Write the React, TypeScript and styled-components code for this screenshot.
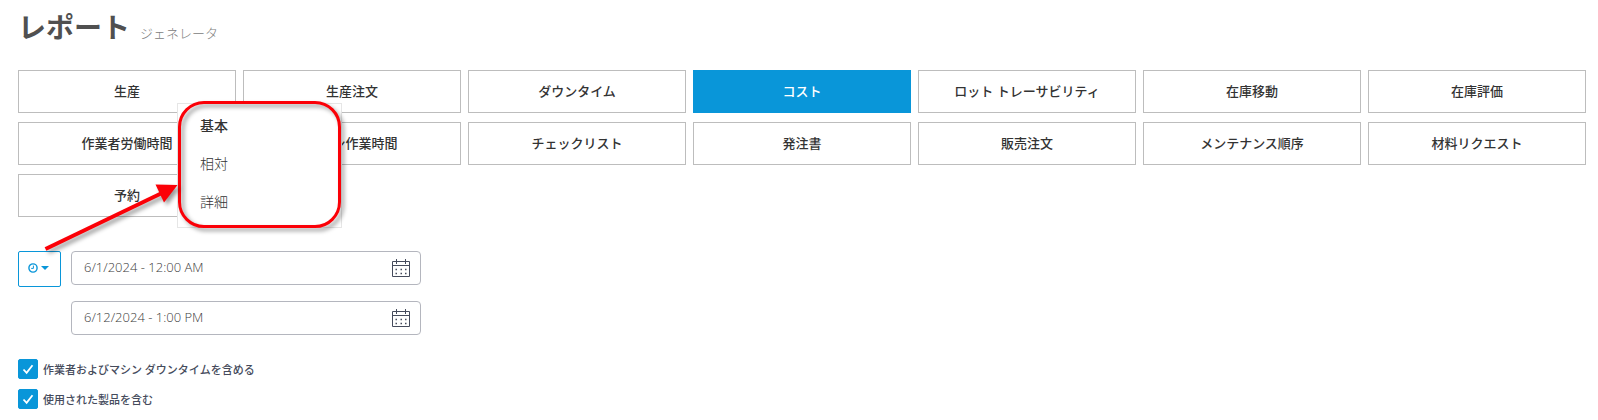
import React, { useState } from "react";
import styled, { createGlobalStyle } from "styled-components";

const blue = "#0996d9";

const GlobalStyle = createGlobalStyle`
  *, *::before, *::after { box-sizing: border-box; }
  body {
    margin: 0;
    background: #fff;
    color: #333;
    font-family: "Open Sans", "Noto Sans CJK JP", sans-serif;
  }
  button, input { font-family: inherit; }
`;

const Page = styled.main`
  position: relative;
  padding: 8px 12px 10px 18px;
`;

const Heading = styled.header`
  display: flex;
  align-items: baseline;
  gap: 10px;
  height: 40px;
  margin-bottom: 22px;
`;

const Title = styled.h1`
  margin: 0;
  font-size: 28px;
  line-height: 38px;
  font-weight: 700;
  color: #505050;
`;

const Subtitle = styled.small`
  font-size: 13px;
  font-weight: 300;
  color: #808080;
`;

const ReportGrid = styled.nav`
  display: grid;
  grid-template-columns: repeat(7, minmax(0, 1fr));
  gap: 9px 7px;
`;

const ReportButton = styled.button<{ $active: boolean }>`
  height: 43px;
  padding: 0 8px 2px;
  border: 1px solid ${(p) => (p.$active ? blue : "#bdbdbd")};
  background: ${(p) => (p.$active ? blue : "#fff")};
  color: ${(p) => (p.$active ? "#fff" : "#333")};
  font-size: 13px;
  font-weight: 500;
  line-height: 20px;
  white-space: nowrap;
  cursor: pointer;
`;

const Period = styled.section`
  display: flex;
  align-items: flex-start;
  gap: 10px;
  margin-top: 34px;
`;

const ModeButton = styled.button`
  display: flex;
  align-items: center;
  justify-content: center;
  gap: 3px;
  width: 43px;
  height: 36px;
  padding: 0 2px 2px 0;
  border: 1px solid ${blue};
  border-radius: 2px;
  background: #fff;
  color: ${blue};
  cursor: pointer;
`;

const Dates = styled.div`
  display: grid;
  gap: 16px;
  width: 350px;
`;

const DateField = styled.label`
  display: flex;
  align-items: center;
  height: 34px;
  padding: 0 10px 0 12px;
  border: 1px solid #b4b6be;
  border-radius: 4px;
`;

const DateInput = styled.input`
  flex: 1;
  min-width: 0;
  padding: 0 0 2px;
  border: 0;
  outline: 0;
  background: none;
  color: #3c3c3c;
  font-size: 13px;
  font-weight: 300;
`;

const Options = styled.div`
  display: grid;
  gap: 10px;
  margin-top: 24px;
`;

const Option = styled.label`
  display: flex;
  align-items: center;
  gap: 5px;
  height: 20px;
  color: #454b5c;
  font-size: 11px;
  font-weight: 500;
`;

const TickBox = styled.span`
  position: relative;
  display: flex;
  width: 20px;
  height: 20px;

  svg {
    position: absolute;
    inset: 0;
    pointer-events: none;
  }
`;

const Tick = styled.input`
  appearance: none;
  width: 20px;
  height: 20px;
  margin: 0;
  border: 1px solid ${blue};
  border-radius: 2px;
  background: #fff;

  &:checked { background: ${blue}; }
`;

const Menu = styled.div`
  position: absolute;
  left: 177px;
  top: 103px;
  display: flex;
  flex-direction: column;
  width: 165px;
  height: 125px;
  padding: 3px 0;
  border: 1px solid #e6e6e6;
  background: #fff;
`;

const MenuItem = styled.button<{ $current: boolean }>`
  height: 38px;
  padding: 0 22px;
  border: 0;
  background: none;
  color: #333;
  font-size: 14px;
  font-weight: ${(p) => (p.$current ? 500 : 300)};
  line-height: 20px;
  text-align: left;
  cursor: pointer;
`;

const Callout = styled.div`
  position: absolute;
  left: 178px;
  top: 101px;
  width: 163px;
  height: 127px;
  border: 3px solid #fb0007;
  border-radius: 26px;
  filter: drop-shadow(3px 3px 2px rgba(0, 0, 0, 0.4));
  pointer-events: none;
`;

const Arrow = styled.svg`
  position: absolute;
  left: 40px;
  top: 176px;
  filter: drop-shadow(3px 3px 2px rgba(0, 0, 0, 0.4));
  pointer-events: none;
`;

const ClockIcon = () => (
  <svg width="10" height="10" viewBox="0 0 10 10" fill="none" stroke="currentColor" aria-hidden="true">
    <circle cx="5" cy="5" r="4.1" strokeWidth="1.4" />
    <path d="M5.4 2.6V5.4H3.2" strokeWidth="1" />
  </svg>
);

const CaretIcon = () => (
  <svg width="8" height="4" viewBox="0 0 8 4" fill="currentColor" aria-hidden="true">
    <path d="M0 0H8L4 4Z" />
  </svg>
);

const CalendarIcon = () => (
  <svg width="18" height="18" viewBox="0 0 18 18" fill="none" stroke="#454b5c" aria-hidden="true">
    <path d="M.5 2.5H17.5V17.5H.5ZM.5 6.5H17.5M4.5 0V5M13.5 0V5" />
    <path d="M3.5 10.5H5M8.5 10.5H10M13 10.5H14.5M3.5 14.5H5M8.5 14.5H10M13 14.5H14.5" strokeWidth="1.3" />
  </svg>
);

const CheckIcon = () => (
  <svg width="20" height="20" viewBox="0 0 20 20" fill="none" stroke="#fff" strokeWidth="1.8" aria-hidden="true">
    <path d="M5.5 10.5L8.6 13.8L14.5 6.2" />
  </svg>
);

const reports = [
  "生産", "生産注文", "ダウンタイム", "コスト", "ロット トレーサビリティ", "在庫移動", "在庫評価",
  "作業者労働時間", "マシン作業時間", "チェックリスト", "発注書", "販売注文", "メンテナンス順序", "材料リクエスト",
  "予約",
];
const modes = ["基本", "相対", "詳細"];
const options = ["作業者およびマシン ダウンタイムを含める", "使用された製品を含む"];

export default function App() {
  const [report, setReport] = useState("コスト");
  const [mode, setMode] = useState("基本");

  return (
    <Page lang="ja">
      <GlobalStyle />
      <Heading>
        <Title>レポート</Title>
        <Subtitle>ジェネレータ</Subtitle>
      </Heading>

      <ReportGrid>
        {reports.map((name) => (
          <ReportButton key={name} type="button" $active={name === report} onClick={() => setReport(name)}>
            {name}
          </ReportButton>
        ))}
      </ReportGrid>

      <Period>
        <ModeButton type="button" aria-haspopup="menu" aria-expanded="true" aria-label="期間">
          <ClockIcon />
          <CaretIcon />
        </ModeButton>
        <Dates>
          <DateField>
            <DateInput type="text" aria-label="開始" defaultValue="6/1/2024 - 12:00 AM" />
            <CalendarIcon />
          </DateField>
          <DateField>
            <DateInput type="text" aria-label="終了" defaultValue="6/12/2024 - 1:00 PM" />
            <CalendarIcon />
          </DateField>
        </Dates>
      </Period>

      <Options>
        {options.map((text) => (
          <Option key={text}>
            <TickBox>
              <Tick type="checkbox" defaultChecked />
              <CheckIcon />
            </TickBox>
            {text}
          </Option>
        ))}
      </Options>

      <Menu role="menu">
        {modes.map((name) => (
          <MenuItem key={name} type="button" role="menuitem" $current={name === mode} onClick={() => setMode(name)}>
            {name}
          </MenuItem>
        ))}
      </Menu>
      <Callout />
      <Arrow width="145" height="80" viewBox="0 0 145 80" aria-hidden="true">
        <path d="M5.5 73L122 17" stroke="#fb0007" strokeWidth="4" />
        <path d="M137.5 9L115.5 8.5L124 26.5Z" fill="#fb0007" />
      </Arrow>
    </Page>
  );
}
